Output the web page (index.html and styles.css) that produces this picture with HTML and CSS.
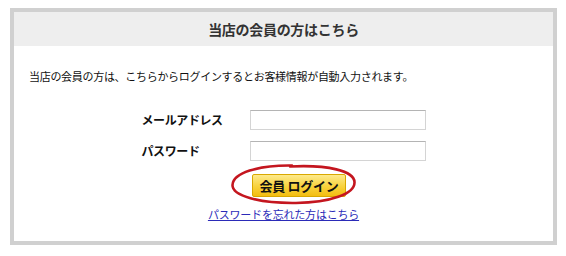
FILE: index.html
```html
<!DOCTYPE html>
<html lang="ja">

<head>
    <meta charset="UTF-8">
    <meta name="viewport" content="width=device-width, initial-scale=1.0">
    <title>会員ログイン</title>
    <link rel="stylesheet" href="styles.css">
</head>

<body>

    <!-- 会員ログイン枠 -->
    <div class="login-box">
        <div class="login-head">当店の会員の方はこちら</div>

        <p class="login-intro">当店の会員の方は、こちらからログインするとお客様情報が自動入力されます。</p>

        <form class="login-form" action="#">
            <div class="form-row">
                <label class="form-label" for="mail">メールアドレス</label>
                <input class="form-input" type="text" id="mail">
            </div>
            <div class="form-row">
                <label class="form-label" for="pass">パスワード</label>
                <input class="form-input" type="password" id="pass">
            </div>

            <div class="btn-wrap">
                <span class="btn-mark">
                    <button class="login-btn" type="button">会員 ログイン</button>
                    <!-- 手書きの赤丸 -->
                    <svg class="circle" viewBox="0 0 127 42" width="127" height="42">
                        <path d="M62 2.5 C 28 2, 3 10, 2.5 22 C 2 33, 30 40.5, 66 40 C 100 39.5, 125 31, 124.5 19 C 124 8, 98 1.5, 60 3.5"
                              fill="none" stroke="#c4161f" stroke-width="2.6" stroke-linecap="round"/>
                    </svg>
                </span>
            </div>

            <div class="forgot"><a href="#">パスワードを忘れた方はこちら</a></div>
        </form>
    </div>

</body>

</html>
```

FILE: styles.css
```css
body {
    margin: 0;
    background: #fff;
    font-family: "Noto Sans CJK JP", "Liberation Sans", sans-serif;
    color: #111;
}

.login-box {
    margin: 8px 0 0 10px;
    width: 539px;
    height: 229px;
    border: 4px solid #d0d0d0;
    background: #fff;
}

.login-head {
    height: 34px;
    line-height: 34px;
    background: #eeeeee;
    text-align: center;
    font-size: 14px;
    font-weight: bold;
    color: #333;
    letter-spacing: -0.3px;
}

.login-intro {
    margin: 22px 0 0 15px;
    font-size: 11px;
    line-height: 16px;
    letter-spacing: -0.3px;
}

.login-form {
    margin-top: 26px;
}

.form-row {
    display: flex;
    justify-content: center;
    margin-bottom: 11px;
}

.form-label {
    width: 108px;
    line-height: 20px;
    font-size: 12px;
    font-weight: bold;
    letter-spacing: -0.4px;
}

.form-input {
    width: 176px;
    height: 20px;
    box-sizing: border-box;
    margin: 0;
    border: 1px solid #d4d4d4;
    border-top-color: #b4b4b4;
    background: #fff;
    outline: none;
}

.btn-wrap {
    display: flex;
    justify-content: center;
    padding-left: 31px;
    margin-top: 13px;
}

.btn-mark {
    position: relative;
    display: inline-block;
}

.login-btn {
    display: block;
    width: 94px;
    height: 23px;
    padding: 0;
    border: 1px solid #d9a800;
    border-radius: 2px;
    background: linear-gradient(#fdea8c, #f8d23c 55%, #f3bd12);
    font-family: inherit;
    font-size: 13px;
    font-weight: bold;
    color: #111;
    letter-spacing: -0.3px;
}

.circle {
    position: absolute;
    left: -22px;
    top: -11px;
    pointer-events: none;
}

.forgot {
    margin-top: 10px;
    text-align: center;
    font-size: 11px;
    line-height: 14px;
    letter-spacing: -0.2px;
}

.forgot a {
    color: #2b2bb8;
    text-decoration: underline;
}
```
